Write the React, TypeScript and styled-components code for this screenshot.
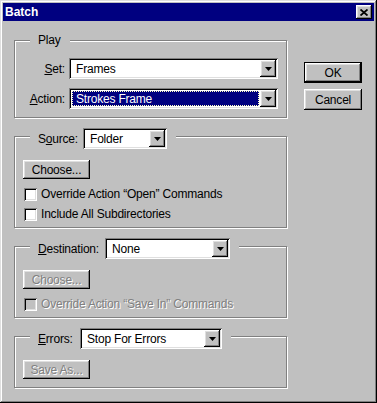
import styled, { createGlobalStyle } from "styled-components";

const Global = createGlobalStyle`
  html, body {
    margin: 0;
    padding: 0;
    background: #c0c0c0;
  }
  body {
    font-family: "Liberation Sans", Arial, sans-serif;
    font-size: 12px;
    letter-spacing: -0.2px;
    color: #000;
  }
`;

const raised = `
  box-shadow: inset -1px -1px #000, inset 1px 1px #fff, inset -2px -2px #808080, inset 2px 2px #dfdfdf;
`;

const sunken = `
  box-shadow: inset 1px 1px #808080, inset -1px -1px #fff, inset 2px 2px #000, inset -2px -2px #dfdfdf;
`;

const Window = styled.div`
  width: 377px;
  height: 403px;
  box-sizing: border-box;
  padding: 3px;
  background: #c0c0c0;
  box-shadow: inset -1px -1px #000, inset 1px 1px #dfdfdf, inset -2px -2px #808080, inset 2px 2px #fff;
  display: flex;
  flex-direction: column;
`;

const TitleBar = styled.div`
  height: 18px;
  background: #000080;
  display: flex;
  align-items: center;
  justify-content: space-between;
  padding: 0 2px;
  color: #fff;
  font-weight: bold;
  letter-spacing: 0;
`;

const TitleText = styled.span`
  line-height: 14px;
`;

const CloseButton = styled.div`
  width: 16px;
  height: 14px;
  background: #c0c0c0;
  ${raised}
  display: flex;
  align-items: center;
  justify-content: center;
`;

const Body = styled.div`
  display: flex;
  padding: 19px 0 0 11px;
`;

const LeftCol = styled.div`
  width: 273px;
  display: flex;
  flex-direction: column;
  gap: 18px;
`;

const RightCol = styled.div`
  width: 58px;
  margin-left: 17px;
  padding-top: 22px;
  display: flex;
  flex-direction: column;
  gap: 6px;
`;

const Group = styled.div<{ $bottom: number }>`
  border: 1px solid #808080;
  box-shadow: inset 1px 1px #fff, 1px 1px #fff;
  display: flex;
  flex-direction: column;
  padding-bottom: ${(p) => p.$bottom}px;
`;

const GroupHeader = styled.div<{ $lift: number }>`
  align-self: flex-start;
  display: flex;
  align-items: center;
  gap: 4px;
  margin: -${(p) => p.$lift}px 0 0 15px;
  padding: 0 9px 0 8px;
  background: #c0c0c0;
  min-height: 14px;
`;

const HeaderLabel = styled.span<{ $width: number }>`
  width: ${(p) => p.$width}px;
  white-space: nowrap;
`;

const FieldGrid = styled.div`
  display: grid;
  grid-template-columns: 50px 209px;
  column-gap: 4px;
  row-gap: 9px;
  align-items: center;
  margin-top: 11px;
`;

const Label = styled.span`
  text-align: right;
`;

const Key = styled.span`
  text-decoration: underline;
  text-underline-offset: 1px;
`;

const SelectBox = styled.div<{ $width: number }>`
  width: ${(p) => p.$width}px;
  height: 21px;
  box-sizing: border-box;
  padding: 2px;
  background: #fff;
  ${sunken}
  display: flex;
  align-items: center;
`;

const SelectValue = styled.div<{ $focused?: boolean }>`
  flex: 1;
  align-self: stretch;
  margin: 1px;
  padding-left: 4px;
  display: flex;
  align-items: center;
  background: ${(p) => (p.$focused ? "#000080" : "transparent")};
  color: ${(p) => (p.$focused ? "#fff" : "#000")};
  outline: ${(p) => (p.$focused ? "1px dotted #ffffc0" : "none")};
  outline-offset: -1px;
  white-space: nowrap;
`;

const ArrowButton = styled.div`
  width: 16px;
  height: 17px;
  background: #c0c0c0;
  ${raised}
  display: flex;
  align-items: center;
  justify-content: center;
`;

const Button = styled.div<{ $disabled?: boolean; $width: number }>`
  width: ${(p) => p.$width}px;
  height: 19px;
  box-sizing: border-box;
  background: #c0c0c0;
  ${raised}
  display: flex;
  align-items: center;
  justify-content: center;
  color: ${(p) => (p.$disabled ? "#808080" : "#000")};
  text-shadow: ${(p) => (p.$disabled ? "1px 1px #fff" : "none")};
`;

const SideButton = styled(Button)<{ $default?: boolean }>`
  height: 21px;
  border: ${(p) => (p.$default ? "1px solid #000" : "none")};
`;

const Inset = styled.div`
  margin: 11px 0 0 8px;
`;

const Checks = styled.div`
  display: flex;
  flex-direction: column;
  gap: 6px;
  margin: 8px 0 0 9px;
`;

const CheckRow = styled.label<{ $disabled?: boolean }>`
  display: flex;
  align-items: center;
  gap: 4px;
  height: 14px;
  color: ${(p) => (p.$disabled ? "#808080" : "#000")};
  text-shadow: ${(p) => (p.$disabled ? "1px 1px #fff" : "none")};
`;

const CheckBox = styled.span<{ $disabled?: boolean }>`
  width: 13px;
  height: 13px;
  box-sizing: border-box;
  background: ${(p) => (p.$disabled ? "#c0c0c0" : "#fff")};
  ${sunken}
`;

function Arrow() {
  return (
    <svg width="7" height="4" viewBox="0 0 7 4">
      <path d="M0 0h7L3.5 4z" fill="#000" />
    </svg>
  );
}

function Select({ width, value, focused }: { width: number; value: string; focused?: boolean }) {
  return (
    <SelectBox $width={width}>
      <SelectValue $focused={focused}>{value}</SelectValue>
      <ArrowButton>
        <Arrow />
      </ArrowButton>
    </SelectBox>
  );
}

function Check({ text, disabled }: { text: string; disabled?: boolean }) {
  return (
    <CheckRow $disabled={disabled}>
      <CheckBox $disabled={disabled} />
      {text}
    </CheckRow>
  );
}

export default function App() {
  return (
    <>
      <Global />
      <Window>
        <TitleBar>
          <TitleText>Batch</TitleText>
          <CloseButton>
            <svg width="8" height="7" viewBox="0 0 8 7">
              <path d="M0.5 0.5L7.5 6.5M7.5 0.5L0.5 6.5" stroke="#000" strokeWidth="1.8" />
            </svg>
          </CloseButton>
        </TitleBar>
        <Body>
          <LeftCol>
            <Group $bottom={8}>
              <GroupHeader $lift={8}>Play</GroupHeader>
              <FieldGrid>
                <Label>
                  <Key>S</Key>et:
                </Label>
                <Select width={209} value="Frames" />
                <Label>
                  <Key>A</Key>ction:
                </Label>
                <Select width={209} value="Strokes Frame" focused />
              </FieldGrid>
            </Group>

            <Group $bottom={6}>
              <GroupHeader $lift={9}>
                <HeaderLabel $width={41}>
                  S<Key>o</Key>urce:
                </HeaderLabel>
                <Select width={84} value="Folder" />
              </GroupHeader>
              <Inset>
                <Button $width={67}>Choose...</Button>
              </Inset>
              <Checks>
                <Check text={"Override Action \u201COpen\u201D Commands"} />
                <Check text="Include All Subdirectories" />
              </Checks>
            </Group>

            <Group $bottom={6}>
              <GroupHeader $lift={9}>
                <HeaderLabel $width={63}>
                  <Key>D</Key>estination:
                </HeaderLabel>
                <Select width={125} value="None" />
              </GroupHeader>
              <Inset>
                <Button $width={67} $disabled>
                  Choose...
                </Button>
              </Inset>
              <Checks>
                <Check text={"Override Action \u201CSave In\u201D Commands"} disabled />
              </Checks>
            </Group>

            <Group $bottom={8}>
              <GroupHeader $lift={9}>
                <HeaderLabel $width={38}>
                  <Key>E</Key>rrors:
                </HeaderLabel>
                <Select width={142} value="Stop For Errors" />
              </GroupHeader>
              <Inset>
                <Button $width={67} $disabled>
                  Save As...
                </Button>
              </Inset>
            </Group>
          </LeftCol>
          <RightCol>
            <SideButton $width={58} $default>
              OK
            </SideButton>
            <SideButton $width={58}>Cancel</SideButton>
          </RightCol>
        </Body>
      </Window>
    </>
  );
}
